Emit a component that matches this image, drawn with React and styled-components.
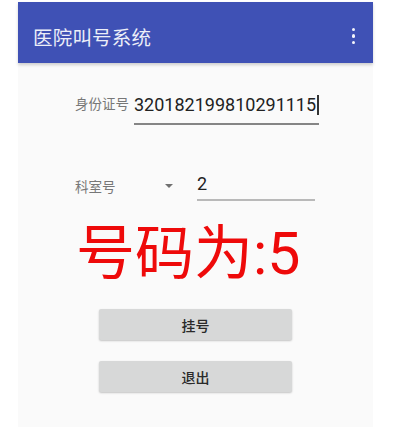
import React from 'react'
import styled, { createGlobalStyle } from 'styled-components'

const GlobalStyle = createGlobalStyle`
  html, body {
    margin: 0;
    padding: 0;
    background: #ffffff;
  }
  body {
    font-family: Roboto, "Noto Sans CJK SC", sans-serif;
  }
`

const Page = styled.div`
  width: 403px;
  height: 433px;
  padding: 2px 0 0 18px;
  box-sizing: border-box;
`

const Screen = styled.div`
  width: 355px;
  height: 425px;
  display: flex;
  flex-direction: column;
  background: #fafafa;
`

const AppBar = styled.div`
  height: 61px;
  flex-shrink: 0;
  display: flex;
  align-items: center;
  justify-content: space-between;
  padding: 7px 18px 0 15px;
  box-sizing: border-box;
  background: #3f51b5;
  box-shadow: 0 2px 3px rgba(0, 0, 0, 0.18);
`

const Title = styled.div`
  font-size: 19.5px;
  color: #eceef8;
  letter-spacing: 0.2px;
`

const Kebab = styled.div`
  display: flex;
  flex-direction: column;
  gap: 3px;
`

const Dot = styled.span`
  width: 3.5px;
  height: 3.5px;
  border-radius: 50%;
  background: #f4f5fb;
`

const Content = styled.div`
  display: flex;
  flex-direction: column;
  padding-left: 57px;
`

const IdRow = styled.div`
  display: flex;
  align-items: flex-start;
  gap: 5px;
  margin-top: 31px;
`

const Label = styled.div`
  font-size: ${(p) => p.$size || 14}px;
  line-height: 16px;
  color: #777777;
  margin-top: ${(p) => p.$offset || 0}px;
`

const Field = styled.div`
  width: ${(p) => p.$width}px;
  font-size: 18px;
  line-height: 22px;
  color: #222222;
  white-space: nowrap;
  padding-bottom: ${(p) => p.$pad}px;
  border-bottom: 2px solid ${(p) => p.$line};
  display: flex;
  align-items: center;
`

const Cursor = styled.span`
  flex-shrink: 0;
  width: 1.5px;
  height: 20px;
  margin-left: 1px;
  background: #333333;
`

const DeptRow = styled.div`
  display: flex;
  align-items: flex-start;
  margin-top: 48px;
  gap: 17px;
`

const Spinner = styled.div`
  width: 105px;
  display: flex;
  align-items: center;
  justify-content: space-between;
  padding-right: 7px;
  box-sizing: border-box;
  margin-top: 6px;
`

const Arrow = styled.span`
  width: 0;
  height: 0;
  border-left: 4px solid transparent;
  border-right: 4px solid transparent;
  border-top: 4px solid #707070;
  margin-top: -2px;
`

const Result = styled.div`
  font-size: 59px;
  line-height: 60px;
  color: #ee0a0a;
  margin-top: 23px;
  padding-left: 1px;
`

const Buttons = styled.div`
  display: flex;
  flex-direction: column;
  align-items: center;
  gap: 21px;
  margin-top: 25px;
`

const Button = styled.button`
  width: 193px;
  height: 31px;
  border: none;
  border-radius: 2px;
  background: #d7d8d8;
  box-shadow: 0 1px 2px rgba(0, 0, 0, 0.22);
  font-family: Roboto, "Noto Sans CJK SC", sans-serif;
  font-size: 14px;
  font-weight: 500;
  color: #2a2a2a;
  padding: 0;
`

const App = () => (
  <Page>
    <GlobalStyle />
    <Screen>
      <AppBar>
        <Title>医院叫号系统</Title>
        <Kebab>
          <Dot />
          <Dot />
          <Dot />
        </Kebab>
      </AppBar>

      <Content>
        <IdRow>
          <Label $size={13.5} $offset={2}>身份证号</Label>
          <Field $width={185} $pad={7} $line="#858585">
            320182199810291115
            <Cursor />
          </Field>
        </IdRow>

        <DeptRow>
          <Spinner>
            <Label $size={13.5}>科室号</Label>
            <Arrow />
          </Spinner>
          <Field $width={118} $pad={4} $line="#b9b9b9">
            2
          </Field>
        </DeptRow>

        <Result>号码为:5</Result>
      </Content>

      <Buttons>
        <Button>挂号</Button>
        <Button>退出</Button>
      </Buttons>
    </Screen>
  </Page>
)

export default App
